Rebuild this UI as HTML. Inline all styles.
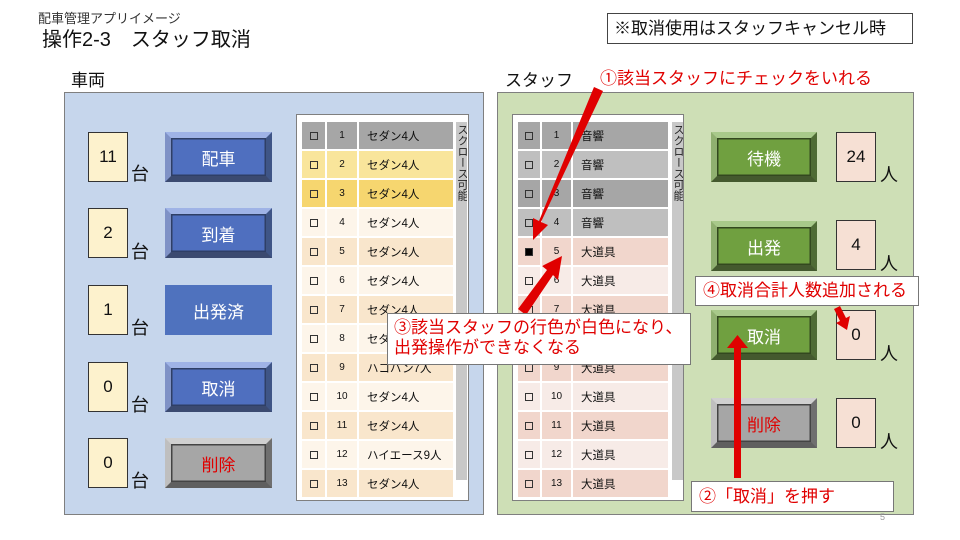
<!DOCTYPE html>
<html><head><meta charset="utf-8">
<style>
*{box-sizing:border-box;margin:0;padding:0}
body{width:960px;height:540px;background:#fff;position:relative;overflow:hidden;font-family:"Liberation Sans","Noto Sans CJK JP",sans-serif;color:#111}
.a{position:absolute}
.panel{position:absolute;border:1px solid #7f7f7f}
.cnt{position:absolute;width:40px;height:50px;border:1.5px solid #333;font-size:17px;display:flex;align-items:center;justify-content:center}
.unit{position:absolute;font-size:18px}
.btn{position:absolute;width:107px;height:50px;display:flex;align-items:center;justify-content:center;font-size:17px;color:#fff}
.bb{background:#4f6fbf;border-style:solid;border-width:6px;border-color:#9fb3e6 #3f5586 #3b4a70 #7f92c6;box-shadow:inset 0 0 0 1.5px #2f3f66}
.bg{background:#70a040;border-style:solid;border-width:6px;border-color:#a8c98a #4f6b35 #44592e #90b070;box-shadow:inset 0 0 0 1.5px #33481f}
.bgray{background:#a6a6a6;color:#e00000;border-style:solid;border-width:6px;border-color:#d0d0d0 #6f6f6f #5f5f5f #bfbfbf;box-shadow:inset 0 0 0 1.5px #444}
.list{position:absolute;background:#fff;border:1px solid #7f7f7f}
.rows{position:absolute;display:flex;flex-direction:column;gap:2px}
.r{display:flex;height:27px;gap:2px;font-size:11px;align-items:center}
.r div{height:100%;display:flex;align-items:center}
.cb{justify-content:center}
.cb span{display:inline-block;width:8px;height:8px;border:1.2px solid #333}
.nm{justify-content:center;font-size:10px}
.tx{padding-left:8px;font-size:11.5px}
.sb{position:absolute;width:11px;background:#c8c8c8;font-size:11px;writing-mode:vertical-rl;line-height:11px;padding-top:2px;color:#222;overflow:hidden}
.call{position:absolute;background:#fff;border:1px solid #777;color:#e00000;font-size:17px;line-height:20px;white-space:nowrap}
</style></head><body>
<div class="a" style="left:38px;top:8px;font-size:13px;color:#333">配車管理アプリイメージ</div>
<div class="a" style="left:42px;top:23px;font-size:20px">操作2-3　スタッフ取消</div>
<div class="a" style="left:607px;top:13px;width:306px;height:31px;border:1px solid #444;font-size:17px;line-height:29px;padding-left:6px">※取消使用はスタッフキャンセル時</div>
<div class="a" style="left:71px;top:66px;font-size:17px">車両</div>
<div class="a" style="left:505px;top:66px;font-size:17px">スタッフ</div>
<div class="a" style="left:600px;top:64px;font-size:17px;color:#e00000">①該当スタッフにチェックをいれる</div>

<div class="panel" style="left:64px;top:92px;width:420px;height:423px;background:#c6d6ec"></div>
<div class="panel" style="left:497px;top:92px;width:417px;height:423px;background:#cedfb6"></div>

<div class="cnt" style="left:88px;top:132px;background:#fdf2cd">11</div><div class="unit" style="left:131px;top:160px">台</div>
<div class="cnt" style="left:88px;top:208px;background:#fdf2cd">2</div><div class="unit" style="left:131px;top:238px">台</div>
<div class="cnt" style="left:88px;top:285px;background:#fdf2cd">1</div><div class="unit" style="left:131px;top:314px">台</div>
<div class="cnt" style="left:88px;top:362px;background:#fdf2cd">0</div><div class="unit" style="left:131px;top:391px">台</div>
<div class="cnt" style="left:88px;top:438px;background:#fdf2cd">0</div><div class="unit" style="left:131px;top:467px">台</div>

<div class="btn bb" style="left:165px;top:132px">配車</div>
<div class="btn bb" style="left:165px;top:208px">到着</div>
<div class="btn" style="left:165px;top:285px;background:#4f72be">出発済</div>
<div class="btn bb" style="left:165px;top:362px">取消</div>
<div class="btn bgray" style="left:165px;top:438px">削除</div>

<div class="list" style="left:296px;top:114px;width:173px;height:387px"></div>
<div class="rows" style="left:302px;top:122px">
<div class="r"><div class="cb" style="width:23px;background:#a6a6a6"><span></span></div><div class="nm" style="width:30px;background:#a6a6a6">1</div><div class="tx" style="width:94px;background:#a6a6a6">セダン4人</div></div>
<div class="r"><div class="cb" style="width:23px;background:#f9e59b"><span></span></div><div class="nm" style="width:30px;background:#f9e59b">2</div><div class="tx" style="width:94px;background:#f9e59b">セダン4人</div></div>
<div class="r"><div class="cb" style="width:23px;background:#f6d66f"><span></span></div><div class="nm" style="width:30px;background:#f6d66f">3</div><div class="tx" style="width:94px;background:#f6d66f">セダン4人</div></div>
<div class="r"><div class="cb" style="width:23px;background:#fdf5ea"><span></span></div><div class="nm" style="width:30px;background:#fdf5ea">4</div><div class="tx" style="width:94px;background:#fdf5ea">セダン4人</div></div>
<div class="r"><div class="cb" style="width:23px;background:#f9e6cc"><span></span></div><div class="nm" style="width:30px;background:#f9e6cc">5</div><div class="tx" style="width:94px;background:#f9e6cc">セダン4人</div></div>
<div class="r"><div class="cb" style="width:23px;background:#fdf5ea"><span></span></div><div class="nm" style="width:30px;background:#fdf5ea">6</div><div class="tx" style="width:94px;background:#fdf5ea">セダン4人</div></div>
<div class="r"><div class="cb" style="width:23px;background:#f9e6cc"><span></span></div><div class="nm" style="width:30px;background:#f9e6cc">7</div><div class="tx" style="width:94px;background:#f9e6cc">セダン4人</div></div>
<div class="r"><div class="cb" style="width:23px;background:#fdf5ea"><span></span></div><div class="nm" style="width:30px;background:#fdf5ea">8</div><div class="tx" style="width:94px;background:#fdf5ea">セダン4人</div></div>
<div class="r"><div class="cb" style="width:23px;background:#f9e6cc"><span></span></div><div class="nm" style="width:30px;background:#f9e6cc">9</div><div class="tx" style="width:94px;background:#f9e6cc">ハコバン7人</div></div>
<div class="r"><div class="cb" style="width:23px;background:#fdf5ea"><span></span></div><div class="nm" style="width:30px;background:#fdf5ea">10</div><div class="tx" style="width:94px;background:#fdf5ea">セダン4人</div></div>
<div class="r"><div class="cb" style="width:23px;background:#f9e6cc"><span></span></div><div class="nm" style="width:30px;background:#f9e6cc">11</div><div class="tx" style="width:94px;background:#f9e6cc">セダン4人</div></div>
<div class="r"><div class="cb" style="width:23px;background:#fdf5ea"><span></span></div><div class="nm" style="width:30px;background:#fdf5ea">12</div><div class="tx" style="width:94px;background:#fdf5ea">ハイエース9人</div></div>
<div class="r"><div class="cb" style="width:23px;background:#f9e6cc"><span></span></div><div class="nm" style="width:30px;background:#f9e6cc">13</div><div class="tx" style="width:94px;background:#f9e6cc">セダン4人</div></div>
</div>
<div class="sb" style="left:456px;top:122px;height:358px">スクロース可能</div>

<div class="list" style="left:512px;top:114px;width:172px;height:387px"></div>
<div class="rows" style="left:518px;top:122px">
<div class="r"><div class="cb" style="width:22px;background:#a6a6a6"><span></span></div><div class="nm" style="width:29px;background:#a6a6a6">1</div><div class="tx" style="width:95px;background:#a6a6a6">音響</div></div>
<div class="r"><div class="cb" style="width:22px;background:#bfbfbf"><span></span></div><div class="nm" style="width:29px;background:#bfbfbf">2</div><div class="tx" style="width:95px;background:#bfbfbf">音響</div></div>
<div class="r"><div class="cb" style="width:22px;background:#a6a6a6"><span></span></div><div class="nm" style="width:29px;background:#a6a6a6">3</div><div class="tx" style="width:95px;background:#a6a6a6">音響</div></div>
<div class="r"><div class="cb" style="width:22px;background:#bfbfbf"><span></span></div><div class="nm" style="width:29px;background:#bfbfbf">4</div><div class="tx" style="width:95px;background:#bfbfbf">音響</div></div>
<div class="r"><div class="cb" style="width:22px;background:#f1d6cc"><span style="background:#000"></span></div><div class="nm" style="width:29px;background:#f1d6cc">5</div><div class="tx" style="width:95px;background:#f1d6cc">大道具</div></div>
<div class="r"><div class="cb" style="width:22px;background:#f7ebe7"><span></span></div><div class="nm" style="width:29px;background:#f7ebe7">6</div><div class="tx" style="width:95px;background:#f7ebe7">大道具</div></div>
<div class="r"><div class="cb" style="width:22px;background:#f1d6cc"><span></span></div><div class="nm" style="width:29px;background:#f1d6cc">7</div><div class="tx" style="width:95px;background:#f1d6cc">大道具</div></div>
<div class="r"><div class="cb" style="width:22px;background:#f7ebe7"><span></span></div><div class="nm" style="width:29px;background:#f7ebe7">8</div><div class="tx" style="width:95px;background:#f7ebe7">大道具</div></div>
<div class="r"><div class="cb" style="width:22px;background:#f1d6cc"><span></span></div><div class="nm" style="width:29px;background:#f1d6cc">9</div><div class="tx" style="width:95px;background:#f1d6cc">大道具</div></div>
<div class="r"><div class="cb" style="width:22px;background:#f7ebe7"><span></span></div><div class="nm" style="width:29px;background:#f7ebe7">10</div><div class="tx" style="width:95px;background:#f7ebe7">大道具</div></div>
<div class="r"><div class="cb" style="width:22px;background:#f1d6cc"><span></span></div><div class="nm" style="width:29px;background:#f1d6cc">11</div><div class="tx" style="width:95px;background:#f1d6cc">大道具</div></div>
<div class="r"><div class="cb" style="width:22px;background:#f7ebe7"><span></span></div><div class="nm" style="width:29px;background:#f7ebe7">12</div><div class="tx" style="width:95px;background:#f7ebe7">大道具</div></div>
<div class="r"><div class="cb" style="width:22px;background:#f1d6cc"><span></span></div><div class="nm" style="width:29px;background:#f1d6cc">13</div><div class="tx" style="width:95px;background:#f1d6cc">大道具</div></div>
</div>
<div class="sb" style="left:672px;top:122px;height:358px">スクロース可能</div>

<div class="btn bg" style="left:711px;top:132px;width:106px">待機</div>
<div class="btn bg" style="left:711px;top:221px;width:106px">出発</div>
<div class="btn bg" style="left:711px;top:310px;width:106px">取消</div>
<div class="btn bgray" style="left:711px;top:398px;width:106px">削除</div>

<div class="cnt" style="left:836px;top:132px;background:#f6e0d4">24</div><div class="unit" style="left:880px;top:161px">人</div>
<div class="cnt" style="left:836px;top:220px;background:#f6e0d4">4</div><div class="unit" style="left:880px;top:250px">人</div>
<div class="cnt" style="left:836px;top:310px;background:#f6e0d4">0</div><div class="unit" style="left:880px;top:340px">人</div>
<div class="cnt" style="left:836px;top:398px;background:#f6e0d4">0</div><div class="unit" style="left:880px;top:428px">人</div>

<svg class="a" style="left:0;top:0" width="960" height="540">
<g fill="#e00000" stroke="none">
<path d="M594 87 L603 91 L541 222 L548 225 L533 240 L533 218 L539 221 Z"/>
<path d="M518 309 L526 315 L553 275 L558 280 L562 256 L542 266 L547 270 Z"/>
<path d="M734 478 L741 478 L741 348 L748 348 L737.5 335 L727 348 L734 348 Z"/>
<path d="M834 309 L840 306 L846 318 L850 316 L847 330 L836 323 L840 321 Z"/>
</g>
</svg>

<div class="call" style="left:387px;top:313px;width:304px;height:52px;padding:4px 0 0 6px">③該当スタッフの行色が白色になり、<br>出発操作ができなくなる</div>
<div class="call" style="left:695px;top:276px;width:224px;height:30px;padding:4px 0 0 7px">④取消合計人数追加される</div>
<div class="call" style="left:691px;top:481px;width:203px;height:31px;padding:5px 0 0 7px">②「取消」を押す</div>
<div class="a" style="left:880px;top:512px;font-size:9px;color:#999">5</div>
</body></html>
